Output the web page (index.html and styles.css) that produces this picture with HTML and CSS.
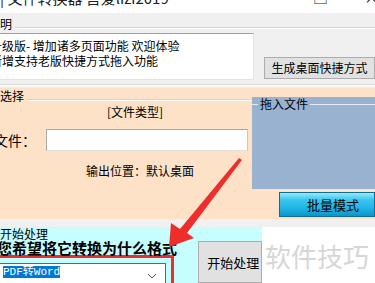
FILE: index.html
```html
<!DOCTYPE html>
<html lang="zh-CN">
<head>
    <meta charset="UTF-8">
    <title>文件转换器</title>
    <link rel="stylesheet" href="styles.css">
</head>
<body>
    <!-- window title bar, mostly scrolled off the top -->
    <div class="titlebar">
        <span class="title">| 文件转换器 吾爱lizi2019</span>
        <span class="ctl max">□</span>
        <span class="ctl close">×</span>
    </div>

    <!-- 说明 group -->
    <section class="info">
        <div class="legend">
            <span class="legend-text">明</span>
            <i class="rule"></i>
        </div>
        <div class="info-row">
            <div class="notes">
                <p>升级版- 增加诸多页面功能 欢迎体验</p>
                <p>新增支持老版快捷方式拖入功能</p>
            </div>
            <button class="btn shortcut">生成桌面快捷方式</button>
        </div>
        <i class="sep"></i>
    </section>

    <!-- 文件选择 group -->
    <section class="pick">
        <div class="pick-left">
            <div class="legend">
                <span class="legend-text">选择</span>
                <i class="rule"></i>
            </div>
            <div class="type-label">[文件类型]</div>
            <div class="file-row">
                <span class="file-label">文件：</span>
                <div class="file-input"></div>
            </div>
            <div class="output">输出位置：默认桌面</div>
        </div>
        <div class="pick-right">
            <div class="drop">
                <div class="drop-legend">
                    <i class="drop-rule short"></i>
                    <span>拖入文件</span>
                    <i class="drop-rule"></i>
                </div>
            </div>
            <button class="btn batch">批量模式</button>
        </div>
    </section>

    <div class="strip"></div>

    <!-- 开始处理 group -->
    <section class="run">
        <div class="run-main">
            <div class="run-legend">
                <span>开始处理</span>
                <i class="run-rule"></i>
            </div>
            <div class="run-row">
                <div class="run-left">
                    <div class="question">您希望将它转换为什么格式</div>
                    <div class="mark">
                        <div class="select">
                            <span class="picked">PDF转Word</span>
                            <svg class="chev" width="10" height="6" viewBox="0 0 10 6">
                                <polyline points="1,1 5,5 9,1" fill="none" stroke="#555" stroke-width="1"/>
                            </svg>
                        </div>
                    </div>
                </div>
                <button class="btn start">开始处理</button>
            </div>
        </div>
        <div class="watermark">软件技巧</div>
    </section>

    <!-- red annotation arrow drawn over the page -->
    <svg class="arrow" width="375" height="283" viewBox="0 0 375 283">
        <polygon points="239,158 242,160 187,233 194,238 169,247 171,223 180,229" fill="#ee2e2b"/>
    </svg>
</body>
</html>
```

FILE: styles.css
```css
/* base */
body {
    margin: 0;
    width: 375px;
    height: 283px;
    overflow: hidden;
    position: relative;
    background: #f0f0f0;
    font-family: "Noto Sans CJK SC", "DejaVu Sans", sans-serif;
    font-size: 12px;
    color: #000;
}

p {
    margin: 0;
}

/* title bar */
.titlebar {
    height: 13px;
    background: #fff;
    overflow: hidden;
    display: flex;
    align-items: flex-start;
}

.title {
    font-size: 15px;
    line-height: 15px;
    margin-top: -10px;
    margin-left: 0;
    color: #222;
    white-space: nowrap;
}

.ctl {
    font-size: 15px;
    line-height: 15px;
    margin-top: -11px;
    color: #222;
}

.max {
    margin-left: auto;
    margin-right: 36px;
}

.close {
    margin-right: -4px;
}

/* group legends */
.legend {
    display: flex;
    align-items: flex-start;
    height: 14px;
}

.legend-text {
    line-height: 14px;
    padding-right: 3px;
}

.rule {
    flex: 1;
    height: 1px;
    background: #d5d5d5;
    border-bottom: 1px solid #fff;
    margin-top: 10px;
}

/* info group */
.info {
    height: 75px;
    padding-top: 4px;
    box-sizing: border-box;
    display: flex;
    flex-direction: column;
}

.info-row {
    display: flex;
    align-items: flex-start;
    margin-top: 2px;
}

.notes {
    width: 260px;
    height: 47px;
    margin-left: -2px;
    box-sizing: border-box;
    background: #fff;
    border-top: 1px solid #a0a0a0;
    border-right: 1px solid #e3e3e3;
    border-bottom: 1px solid #e3e3e3;
    padding-top: 4px;
    overflow: hidden;
    line-height: 15px;
    white-space: nowrap;
    text-indent: -8px;
}

.btn {
    font-family: "Noto Sans CJK SC", sans-serif;
    background: #e1e1e1;
    border: 1px solid #adadad;
    color: #000;
    padding: 0;
    text-align: left;
}

.shortcut {
    margin-left: 10px;
    margin-top: 24px;
    width: 112px;
    height: 22px;
    font-size: 12px;
    line-height: 18px;
    padding-left: 6px;
    white-space: nowrap;
}

.sep {
    display: block;
    height: 1px;
    margin-top: 4px;
    background: #dcdcdc;
    border-bottom: 1px solid #fff;
}

/* file pick group */
.pick {
    height: 131px;
    background: #fde2c8;
    display: flex;
}

.pick-left {
    width: 255px;
    display: flex;
    flex-direction: column;
    padding-top: 1px;
}

.type-label {
    line-height: 14px;
    padding-left: 107px;
    margin-top: 2px;
}

.file-row {
    display: flex;
    align-items: center;
    margin-top: 10px;
    height: 22px;
}

.file-label {
    font-size: 14px;
    margin-left: -6px;
    width: 52px;
}

.file-input {
    width: 202px;
    height: 22px;
    box-sizing: border-box;
    background: #fff;
    border: 1px solid #a9a9a9;
    border-right-color: #c8c8c8;
    border-bottom-color: #e0e0e0;
}

.output {
    line-height: 14px;
    padding-left: 86px;
    margin-top: 13px;
}

.pick-right {
    flex: 1;
    display: flex;
    flex-direction: column;
    padding-top: 9px;
}

.drop {
    height: 92px;
    background: #98b2d0;
    border-bottom: 1px solid #e2e9f1;
}

.drop-legend {
    display: flex;
    align-items: flex-start;
}

.drop-legend span {
    line-height: 14px;
    padding: 0 2px;
}

.drop-rule {
    flex: 1;
    height: 1px;
    margin-top: 7px;
    background: #e4ebf3;
}

.drop-rule.short {
    flex: 0 0 6px;
}

.batch {
    margin-top: 2px;
    margin-left: 27px;
    width: 96px;
    height: 25px;
    font-size: 13px;
    text-align: left;
    padding-left: 27px;
    border: 1px solid #0b6e98;
    background: linear-gradient(#9ae9fb 0%, #38c6ee 30%, #1eb2e4 70%, #0c94c9 100%);
}

.strip {
    height: 8px;
    background: #f0f0f0;
}

/* run group */
.run {
    flex: 1;
    height: 56px;
    display: flex;
}

.run-main {
    width: 262px;
    background: #c6fdfd;
    display: flex;
    flex-direction: column;
}

.run-legend {
    display: flex;
    align-items: flex-start;
    height: 16px;
}

.run-legend span {
    line-height: 13px;
    padding-right: 3px;
}

.run-rule {
    flex: 1;
    height: 1px;
    margin-top: 4px;
    background: #e8ffff;
}

.run-row {
    display: flex;
    align-items: flex-start;
}

.run-left {
    width: 199px;
}

.question {
    font-size: 15px;
    font-weight: bold;
    line-height: 15px;
    margin-left: -3px;
    white-space: nowrap;
}

.mark {
    width: 178px;
    height: 30px;
    margin-left: -4px;
    box-sizing: border-box;
    border: 3px solid #e5302e;
    border-bottom: none;
    padding-top: 5px;
}

.select {
    width: 167px;
    height: 22px;
    box-sizing: border-box;
    background: #fff;
    border: 1px solid #3d6fa3;
    display: flex;
    align-items: flex-start;
    padding-left: 3px;
    padding-top: 2px;
}

.picked {
    font-family: "Liberation Mono", "Noto Sans CJK SC", monospace;
    font-size: 11px;
    line-height: 12px;
    background: #0078d7;
    color: #fff;
}

.chev {
    margin-left: auto;
    margin-right: 8px;
    margin-top: 7px;
}

.start {
    width: 64px;
    height: 42px;
    margin-top: 1px;
    font-size: 13px;
    padding-left: 8px;
    padding-top: 0;
    white-space: nowrap;
}

.watermark {
    flex: 1;
    background: #fff;
    color: #d6d6d6;
    font-size: 26px;
    line-height: 26px;
    padding-top: 16px;
    padding-left: 3px;
    white-space: nowrap;
}

/* annotation */
.arrow {
    position: absolute;
    left: 0;
    top: 0;
    pointer-events: none;
}
```
